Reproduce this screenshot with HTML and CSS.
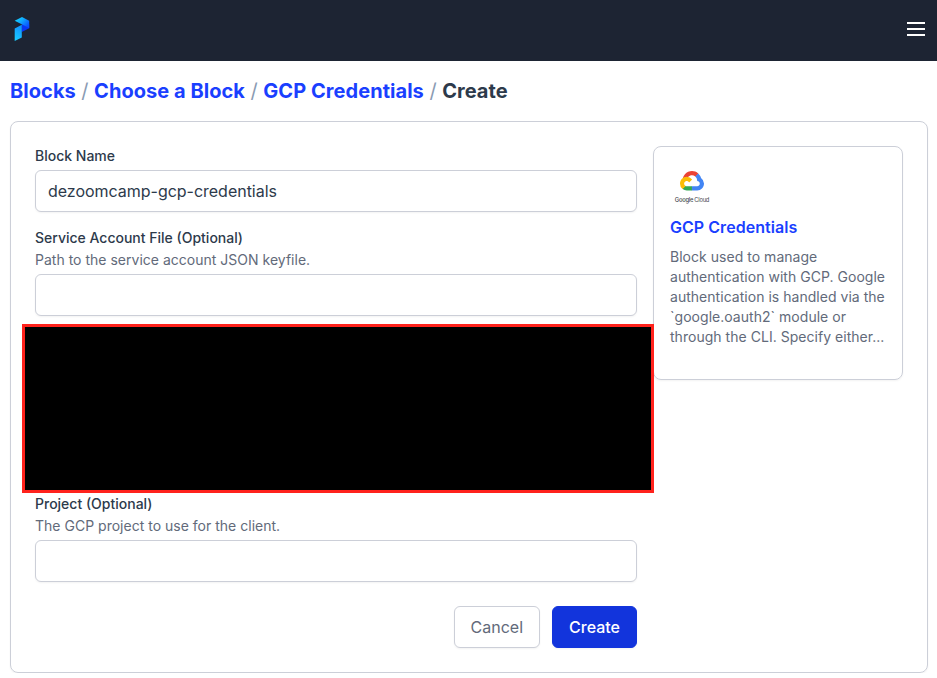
FILE: index.html
```html
<!DOCTYPE html>
<html lang="en">
<head>
<meta charset="utf-8">
<title>Create GCP Credentials Block</title>
<link rel="stylesheet" href="styles.css">
</head>
<body>
<header class="topbar">
  <a class="brand" aria-label="Home">
    <svg width="16" height="26" viewBox="0 0 16 26">
      <defs>
        <linearGradient id="fold" x1="0" y1="0" x2="1" y2="0.7"><stop offset="0" stop-color="#16dcff"/><stop offset=".45" stop-color="#10aeff"/><stop offset="1" stop-color="#0a50ff"/></linearGradient>
        <linearGradient id="stem" x1="0.6" y1="0" x2="0.3" y2="1"><stop offset="0" stop-color="#1290ff"/><stop offset="1" stop-color="#18ccff"/></linearGradient>
      </defs>
      <path d="M7.8 8.2 15.2 8v4.2L7.8 16z" fill="#0836f5"/>
      <path d="M.7 4.7 8 1.1l7.2 3.6v7.4z" fill="url(#fold)"/>
      <path d="M.7 12.4 7.8 8.7v12.7L.7 25z" fill="url(#stem)"/>
    </svg>
  </a>
  <button class="menu" aria-label="Open menu">
    <svg width="18" height="14" viewBox="0 0 18 14"><path d="M0 1h18M0 7h18M0 13h18" stroke="#fff" stroke-width="2"/></svg>
  </button>
</header>
<main class="page">
  <nav class="crumbs">
    <a>Blocks</a><span class="sep">/</span><a>Choose a Block</a><span class="sep">/</span><a>GCP Credentials</a><span class="sep">/</span><span>Create</span>
  </nav>
  <section class="panel">
    <form class="form">
      <div class="field">
        <label for="name">Block Name</label>
        <input id="name" type="text" value="dezoomcamp-gcp-credentials">
      </div>
      <div class="field">
        <label for="file">Service Account File (Optional)</label>
        <p class="hint">Path to the service account JSON keyfile.</p>
        <input id="file" type="text">
      </div>
      <div class="redacted"></div>
      <div class="field">
        <label for="project">Project (Optional)</label>
        <p class="hint">The GCP project to use for the client.</p>
        <input id="project" type="text">
      </div>
      <div class="actions">
        <button type="button" class="btn">Cancel</button>
        <button type="button" class="btn btn-primary">Create</button>
      </div>
    </form>
    <aside class="card">
      <div class="logo">
        <svg width="24" height="19.5" viewBox="0 0 256 206">
          <path fill="#ea4335" d="M170.252 56.819l22.253-22.253 1.483-9.37C153.437-11.677 88.976-7.496 52.42 33.92 42.267 45.423 34.734 59.764 30.717 74.573l7.97-1.123 44.505-7.34 3.436-3.513c19.797-21.742 53.27-24.667 76.128-6.168l7.496.39z"/>
          <path fill="#4285f4" d="M224.205 73.918a100.249 100.249 0 0 0-30.217-48.722l-31.232 31.232a55.515 55.515 0 0 1 20.379 44.037v5.544c15.35 0 27.797 12.445 27.797 27.796 0 15.352-12.446 27.485-27.797 27.485h-55.671l-5.466 5.934v33.34l5.466 5.231h55.67c39.93.311 72.553-31.494 72.864-71.424a72.303 72.303 0 0 0-31.793-60.453"/>
          <path fill="#34a853" d="M71.87 205.796h55.593V161.29H71.87a27.275 27.275 0 0 1-11.467-2.498l-7.887 2.42-22.409 22.252-1.952 7.574a72.115 72.115 0 0 0 43.715 14.758"/>
          <path fill="#fbbc05" d="M71.87 61.425C31.94 61.664-.237 94.228.001 134.158a72.301 72.301 0 0 0 28.222 56.88l32.248-32.246c-13.99-6.322-20.208-22.786-13.887-36.776 6.32-13.99 22.786-20.208 36.775-13.888a27.796 27.796 0 0 1 13.887 13.888l32.248-32.248A72.224 72.224 0 0 0 71.87 61.425"/>
        </svg>
        <span class="logo-text"><b>Google</b> Cloud</span>
      </div>
      <h2>GCP Credentials</h2>
      <p class="about">Block used to manage authentication with GCP. Google authentication is handled via the `google.oauth2` module or through the CLI. Specify either...</p>
    </aside>
  </section>
</main>
</body>
</html>
```

FILE: styles.css
```css
* { box-sizing: border-box; margin: 0; }
body { background: #fff; color: #2d3a4b; font-family: Inter, "Liberation Sans", sans-serif; font-size: 16px; line-height: 24px; }
.topbar { height: 61px; background: #1d2433; display: flex; align-items: center; justify-content: space-between; padding: 0 12px 3px 14px; }
.brand, .menu { display: flex; }
.menu { border: 0; padding: 0; background: none; }
.page { padding: 16px 9px 0 10px; }
.crumbs { display: flex; gap: 5.5px; font-size: 20px; line-height: 28px; font-weight: 700; letter-spacing: 0.05px; }
.crumbs a { color: #1a3fff; }
.crumbs .sep { color: #8a9bb3; font-weight: 400; }
.panel { display: flex; align-items: flex-start; gap: 16px; margin-top: 16px; padding: 24px; border: 1px solid #cccfd8; border-radius: 8px; box-shadow: 0 1px 2px rgba(0,0,0,.05); }
.form { flex: 1; display: flex; flex-direction: column; }
.field { display: flex; flex-direction: column; }
.field + .field { margin-top: 16px; }
.field label { font-size: 14px; line-height: 20px; font-weight: 500; }
.hint { margin-top: 2px; font-size: 14px; line-height: 20px; color: #626a7a; letter-spacing: 0.01px; }
.field input { margin-top: 4px; height: 42px; padding: 0 12px; border: 1px solid #cccfd8; border-radius: 6px; background: #fff; color: inherit; font: inherit; letter-spacing: -0.02px; box-shadow: 0 1px 2px rgba(0,0,0,.05); }
.redacted { position: relative; z-index: 1; height: 169px; margin: 8px -17px 1px -13px; background: #000; border: 3px solid #ff221c; }
.actions { display: flex; justify-content: flex-end; gap: 12px; margin-top: 24px; }
.btn { height: 42px; padding: 0 16px; border: 1px solid #cccfd8; border-radius: 6px; background: #fff; color: #626a7a; font: inherit; box-shadow: 0 1px 2px rgba(0,0,0,.05); }
.btn-primary { background: #1234dc; border-color: #1234dc; color: #fff; font-weight: 500; }
.card { width: 250px; height: 234px; padding: 16px; border: 1px solid #cccfd8; border-radius: 8px; box-shadow: 0 1px 2px rgba(0,0,0,.05); }
.logo { width: 44px; height: 44px; padding-top: 8px; display: flex; flex-direction: column; align-items: center; }
.logo-text { margin-top: 5.5px; font-size: 5.8px; line-height: 8px; letter-spacing: -0.22px; white-space: nowrap; color: #45484d; }
.logo-text b { font-weight: 500; margin-right: -0.5px; }
.card h2 { margin-top: 8px; font-size: 16px; line-height: 24px; font-weight: 600; letter-spacing: 0.04px; color: #1a3fff; }
.about { margin-top: 8px; font-size: 14px; line-height: 20px; letter-spacing: 0.03px; color: #626a7a; }
```
